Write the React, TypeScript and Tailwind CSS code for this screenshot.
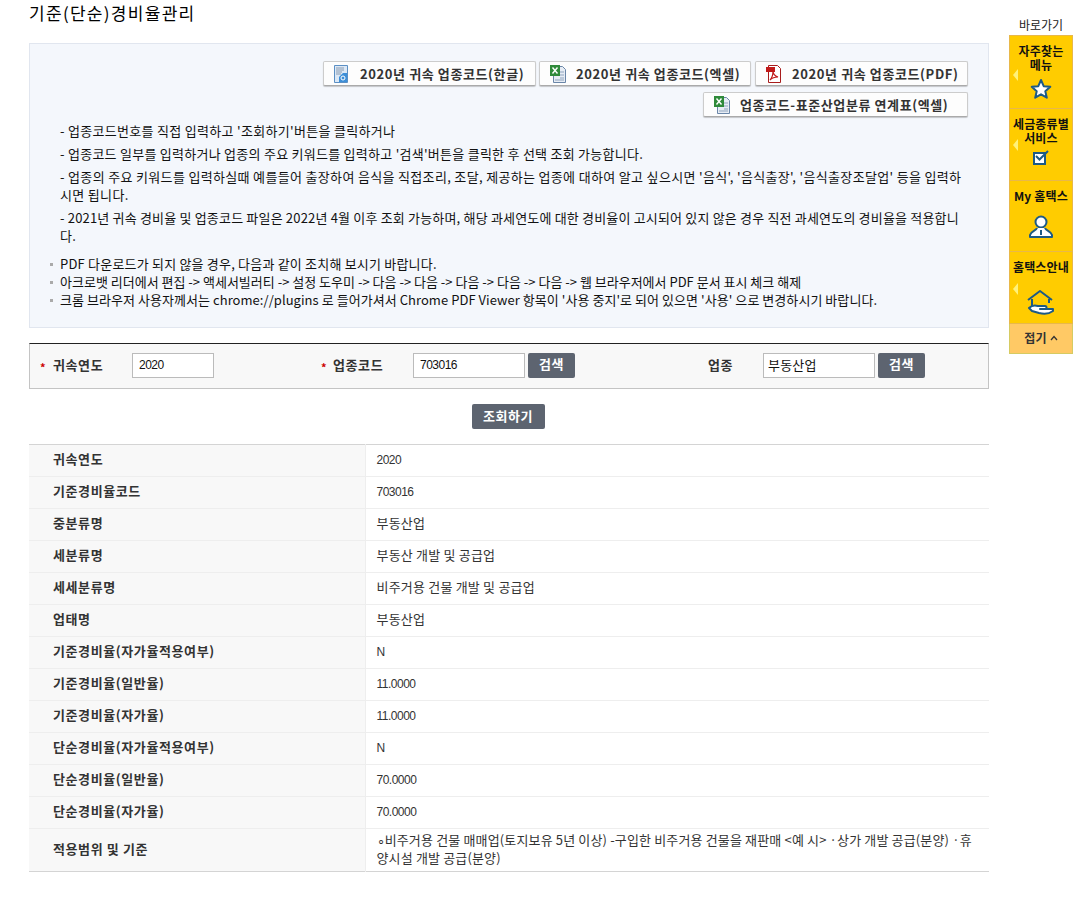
import type { ReactNode } from "react";

const num = "text-[12px] tracking-[-0.5px] [font-family:'Liberation_Sans',sans-serif]";

const rows: [string, ReactNode][] = [
  ["귀속연도", <span className={num}>2020</span>],
  ["기준경비율코드", <span className={num}>703016</span>],
  ["중분류명", "부동산업"],
  ["세분류명", "부동산 개발 및 공급업"],
  ["세세분류명", "비주거용 건물 개발 및 공급업"],
  ["업태명", "부동산업"],
  ["기준경비율(자가율적용여부)", <span className={num}>N</span>],
  ["기준경비율(일반율)", <span className={num}>11.0000</span>],
  ["기준경비율(자가율)", <span className={num}>11.0000</span>],
  ["단순경비율(자가율적용여부)", <span className={num}>N</span>],
  ["단순경비율(일반율)", <span className={num}>70.0000</span>],
  ["단순경비율(자가율)", <span className={num}>70.0000</span>],
];

function HwpIcon() {
  return (
    <svg width="16" height="18" viewBox="0 0 16 18" className="shrink-0">
      <path d="M.5.5h13v17H.5z" fill="#dbe8f6" stroke="#5b8fc4" />
      <path d="M2 3h8M2 5h8M2 7h6M2 9h5" stroke="#8a9bb0" />
      <path d="M5 17v-5l4-4h4v9z" fill="#3d8fd8" />
      <circle cx="9" cy="13" r="2" fill="none" stroke="#fff" />
    </svg>
  );
}

function ExcelIcon() {
  return (
    <svg width="16" height="18" viewBox="0 0 16 18" className="shrink-0">
      <path d="M3.5 1.5h9l3 3v13h-12z" fill="#e6ecf4" stroke="#6a86a8" />
      <path d="M10 7h4M10 10h4M10 13h4M5 15h9" stroke="#8fa4bd" />
      <rect x="0" y="0" width="10" height="11" fill="#2f8a3a" />
      <path d="M2.5 2.5l5 6M7.5 2.5l-5 6" stroke="#fff" strokeWidth="1.4" />
    </svg>
  );
}

function PdfIcon() {
  return (
    <svg width="16" height="18" viewBox="0 0 16 18" className="shrink-0">
      <path d="M2.5.5h9l3 3v14h-12z" fill="#fff" stroke="#a81c1c" />
      <rect x="0" y="2" width="9" height="5" fill="#c11a1a" />
      <path d="M4 15c2-2 3-6 3-9 0 3 2 5 5 6-3 0-6 1-8 3z" fill="none" stroke="#c11a1a" strokeWidth="1.2" />
    </svg>
  );
}

function FileButton({ icon, label, className }: { icon: ReactNode; label: string; className: string }) {
  return (
    <button
      type="button"
      className={`flex h-[25px] items-center gap-[10px] rounded-[2px] border border-[#ccc] border-b-[#aaa] bg-[#fdfdfd] pl-[10px] text-[13px] font-bold tracking-[0.6px] text-[#333] shadow-[0_1px_1px_rgba(0,0,0,0.2)] ${className}`}
    >
      {icon}
      <span className="whitespace-nowrap">{label}</span>
    </button>
  );
}

function GrayButton({ label, className }: { label: string; className: string }) {
  return (
    <button
      type="button"
      className={`h-[25px] rounded-[2px] bg-[#5d6470] pb-[2px] text-[13px] font-bold tracking-[0.6px] text-white ${className}`}
    >
      {label}
    </button>
  );
}

function Required({ className }: { className: string }) {
  return <span className={`inline-block pt-[3px] text-[11px] font-bold text-[#c00] ${className}`}>*</span>;
}

function SideItem({
  title,
  icon,
  arrow,
  className,
}: {
  title: ReactNode;
  icon: ReactNode;
  arrow?: string;
  className: string;
}) {
  return (
    <div className={`relative flex flex-col items-center border-b border-[#e8b84a] pt-[8px] ${className}`}>
      {arrow && (
        <span
          className={`absolute left-[3px] h-0 w-0 border-y-[6px] border-r-[5px] border-y-transparent border-r-[#fff27a] ${arrow}`}
        />
      )}
      <div className="text-center text-[12px] font-bold leading-[14px] tracking-[0.2px] whitespace-nowrap text-[#111]">{title}</div>
      <div className="mt-auto mb-[8px]">{icon}</div>
    </div>
  );
}

export default function App() {
  return (
    <div className="flex min-h-[903px] bg-white text-[13px] leading-[18px] tracking-[0.2px] text-[#111] [font-family:'Noto_Sans_CJK_KR','Liberation_Sans',sans-serif]">
      <main className="ml-[29px] w-[960px] shrink-0">
        <h1 className="mt-[2px] mb-[1px] h-[40px] text-[17px] leading-[22px] font-normal tracking-[1.3px] text-black">기준(단순)경비율관리</h1>

        <section className="h-[285px] border border-[#e1e6ef] bg-[#f4f7fc] pt-[17px]">
          <div className="flex flex-col items-end gap-[6px] pr-[20px]">
            <div className="flex">
              <FileButton className="w-[213px]" icon={<HwpIcon />} label="2020년 귀속 업종코드(한글)" />
              <FileButton className="ml-[3px] w-[212px]" icon={<ExcelIcon />} label="2020년 귀속 업종코드(엑셀)" />
              <FileButton className="ml-[4px] w-[213px]" icon={<PdfIcon />} label="2020년 귀속 업종코드(PDF)" />
            </div>
            <FileButton className="w-[265px]" icon={<ExcelIcon />} label="업종코드-표준산업분류 연계표(엑셀)" />
          </div>
          <div className="mt-[5px] space-y-[5px] pl-[30px] whitespace-nowrap">
            <p className="tracking-[0.3px]">- 업종코드번호를 직접 입력하고 '조회하기'버튼을 클릭하거나</p>
            <p className="tracking-[0.26px]">- 업종코드 일부를 입력하거나 업종의 주요 키워드를 입력하고 '검색'버튼을 클릭한 후 선택 조회 가능합니다.</p>
            <p className="tracking-[0.33px]">
              - 업종의 주요 키워드를 입력하실때 예를들어 출장하여 음식을 직접조리, 조달, 제공하는 업종에 대하여 알고 싶으시면 '음식', '음식출장', '음식출장조달업' 등을 입력하
              <br />
              시면 됩니다.
            </p>
            <p className="tracking-[0.18px]">
              - 2021년 귀속 경비율 및 업종코드 파일은 2022년 4월 이후 조회 가능하며, 해당 과세연도에 대한 경비율이 고시되어 있지 않은 경우 직전 과세연도의 경비율을 적용합니
              <br />
              다.
            </p>
          </div>
          <ul className="mt-[10px] pl-[20px]">
            <li className="flex items-center gap-[7px] whitespace-nowrap">
              <span className="h-[3px] w-[3px] bg-[#aaa]" />
              PDF 다운로드가 되지 않을 경우, 다음과 같이 조치해 보시기 바랍니다.
            </li>
            <li className="flex items-center gap-[7px] tracking-normal whitespace-nowrap">
              <span className="h-[3px] w-[3px] bg-[#aaa]" />
              아크로뱃 리더에서 편집 -&gt; 액세서빌러티 -&gt; 설정 도우미 -&gt; 다음 -&gt; 다음 -&gt; 다음 -&gt; 다음 -&gt; 다음 -&gt; 웹 브라우저에서 PDF 문서 표시 체크 해제
            </li>
            <li className="flex items-center gap-[7px] tracking-[0.05px] whitespace-nowrap">
              <span className="h-[3px] w-[3px] bg-[#aaa]" />
              크롬 브라우저 사용자께서는 chrome://plugins 로 들어가셔서 Chrome PDF Viewer 항목이 '사용 중지'로 되어 있으면 '사용' 으로 변경하시기 바랍니다.
            </li>
          </ul>
        </section>

        <section className="mt-[15px] flex h-[46px] items-center border border-[#c4c4c4] border-t-[#222] bg-[#f8f8f8] pb-[2px] font-bold tracking-[0.6px] text-[#333]">
          <div className="flex w-[281px] items-center pl-[10px]">
            <Required className="w-[13px]" />
            <span className="w-[79px]">귀속연도</span>
            <input readOnly value="2020" className={`h-[25px] w-[82px] border border-[#bbb] bg-white px-[6px] font-normal text-[#111] ${num}`} />
          </div>
          <div className="flex w-[397px] items-center pl-[10px]">
            <Required className="w-[12px]" />
            <span className="w-[80px]">업종코드</span>
            <input readOnly value="703016" className={`h-[25px] w-[112px] border border-[#bbb] bg-white px-[6px] font-normal text-[#111] ${num}`} />
            <GrayButton label="검색" className="ml-[3px] w-[47px]" />
          </div>
          <div className="flex items-center">
            <span className="w-[55px]">업종</span>
            <input readOnly value="부동산업" className="h-[25px] w-[112px] border border-[#bbb] bg-white px-[4px] pb-[2px] text-[13px] font-normal tracking-[0.2px] text-[#111]" />
            <GrayButton label="검색" className="ml-[3px] w-[47px]" />
          </div>
        </section>

        <div className="mt-[15px] flex justify-center pr-[2px]">
          <GrayButton label="조회하기" className="w-[73px]" />
        </div>

        <table className="mt-[15px] w-full border-collapse border-y border-y-[#d4d4d4]">
          <tbody>
            {rows.map(([label, value]) => (
              <tr key={label} className="h-[32px] border-b border-[#eee]">
                <th className="w-[336px] border-r border-[#eee] bg-[#f8f8f8] pb-[3px] pl-[24px] text-left font-bold tracking-[0.6px] text-[#333]">{label}</th>
                <td className="pb-[3px] pl-[11px] text-[#333]">{value}</td>
              </tr>
            ))}
            <tr className="h-[43px]">
              <th className="border-r border-[#eee] bg-[#f8f8f8] pb-[3px] pl-[24px] text-left font-bold tracking-[0.6px] text-[#333]">적용범위 및 기준</th>
              <td className="pb-[3px] pl-[11px] tracking-[0.15px] whitespace-nowrap text-[#333]">
                ∘비주거용 건물 매매업(토지보유 5년 이상) -구입한 비주거용 건물을 재판매 &lt;예 시&gt; ·상가 개발 공급(분양) ·휴
                <br />
                양시설 개발 공급(분양)
              </td>
            </tr>
          </tbody>
        </table>
      </main>

      <aside className="ml-[20px] mt-[17px] w-[64px] shrink-0">
        <div className="h-[18px] text-center text-[12px] leading-[16px] tracking-normal whitespace-nowrap text-[#222]">바로가기</div>
        <div className="border border-[#e8b84a] bg-[#ffcc00]">
          <SideItem
            arrow="top-[33px]"
            className="h-[73px]"
            title={<>자주찾는<br />메뉴</>}
            icon={
              <svg width="22" height="22" viewBox="0 0 22 22">
                <path d="M11 2l2.7 6.2 6.6.6-5 4.4 1.5 6.5L11 16.3 5.2 19.7l1.5-6.5-5-4.4 6.6-.6z" fill="#fff" stroke="#1d5a85" strokeWidth="2" strokeLinejoin="round" />
              </svg>
            }
          />
          <SideItem
            arrow="top-[30px]"
            className="h-[72px]"
            title={<>세금종류별<br />서비스</>}
            icon={
              <svg width="18" height="16" viewBox="0 0 18 16" className="mb-[6px]">
                <rect x="2" y="3" width="11" height="11" fill="#fff" stroke="#1d5a85" strokeWidth="2" />
                <path d="M4 6l3.5 3.5L16 1" fill="none" stroke="#1d5a85" strokeWidth="2" />
              </svg>
            }
          />
          <SideItem
            className="h-[71px]"
            title="My 홈택스"
            icon={
              <svg width="26" height="26" viewBox="0 0 26 26" fill="none" stroke="#1d5a85" strokeWidth="2" className="mb-[3px]">
                <circle cx="13" cy="8" r="5.5" fill="#fff" />
                <path d="M9 14c-1 3-6 3-7 7v2h22v-2c-1-4-6-4-7-7" fill="#fff" strokeLinejoin="round" />
                <path d="M13 16v5" />
              </svg>
            }
          />
          <SideItem
            arrow="top-[31px]"
            className="h-[71px] border-b-0"
            title="홈택스안내"
            icon={
              <svg width="30" height="26" viewBox="0 0 30 26" fill="none" stroke="#1d5a85" strokeWidth="2">
                <path d="M2 11L14 2l12 9" strokeLinejoin="round" />
                <path d="M6 10v7M23 10v4" />
                <path d="M3 19c3-3 6-3 9-2h7c2 0 2 3 0 3h-5 13v2c-4 3-10 3-14 2l-7-2z" fill="#fff" strokeLinejoin="round" />
              </svg>
            }
          />
        </div>
        <div className="flex h-[30px] items-center justify-center gap-[3px] border border-t-0 border-[#d6cb62] bg-[#ffc965] pb-[1px] text-[12px] font-bold text-[#333]">
          접기
          <svg width="8" height="6" viewBox="0 0 8 6" fill="none" stroke="#333" strokeWidth="1.3">
            <path d="M1 5l3-3.5L7 5" />
          </svg>
        </div>
      </aside>
    </div>
  );
}
